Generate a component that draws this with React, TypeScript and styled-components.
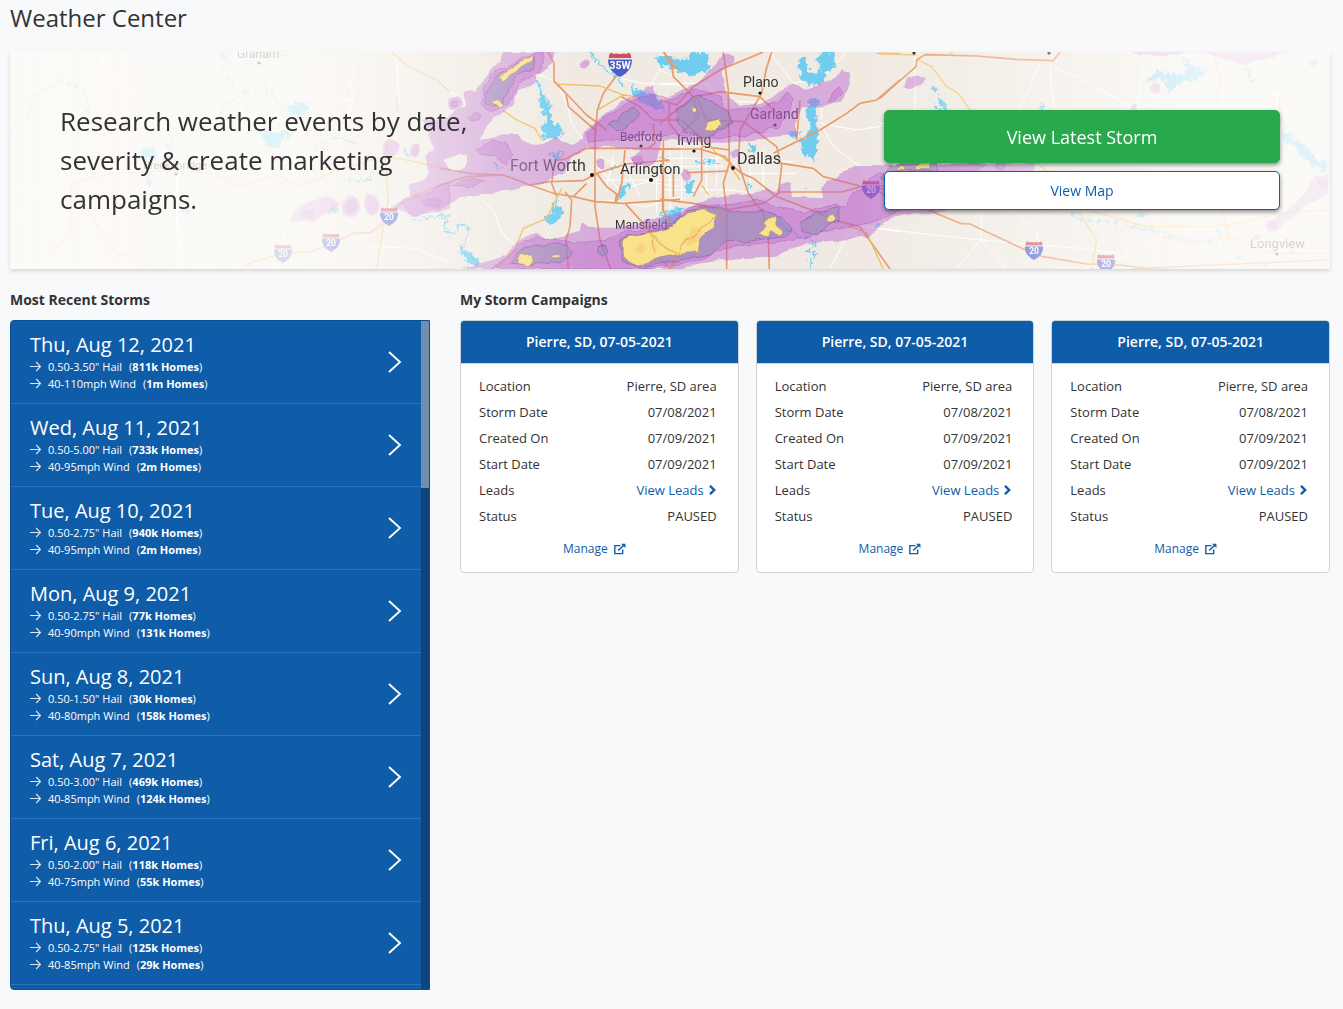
import React from "react";
import styled, { createGlobalStyle } from "styled-components";

const GlobalStyle = createGlobalStyle`
  *, *::before, *::after { box-sizing: border-box; }
  body {
    margin: 0;
    background: #f8f9fb;
    color: #333;
    font-family: "Open Sans", "Noto Sans", sans-serif;
    font-size: 13px;
    line-height: 20px;
  }
  h1, h2, h3, p, ul, dl, dd { margin: 0; padding: 0; }
  a { text-decoration: none; }
`;

const Page = styled.main`
  padding: 0 13px 19px 10px;
`;

const PageTitle = styled.h1`
  padding: 2px 0 18px;
  font-size: 24px;
  line-height: 32px;
  font-weight: 400;
`;

const Banner = styled.section`
  position: relative;
  display: flex;
  align-items: flex-start;
  justify-content: space-between;
  gap: 30px;
  padding: 50px;
  background: #fdfcfa;
  box-shadow: 0 2px 4px rgba(0, 0, 0, 0.14);
`;

const MapBackdrop = styled.svg`
  position: absolute;
  inset: 0;
  width: 100%;
  height: 100%;
`;

const BannerText = styled.p`
  position: relative;
  flex: 0 1 440px;
  font-size: 26px;
  line-height: 39px;
`;

const BannerActions = styled.div`
  position: relative;
  display: flex;
  flex-direction: column;
  gap: 8px;
  flex: 0 0 396px;
  padding-top: 8px;
`;

const ActionButton = styled.button<{ $primary?: boolean }>`
  height: ${(p) => (p.$primary ? 53 : 39)}px;
  border: 1px solid ${(p) => (p.$primary ? "#28a94b" : "#0f5ca8")};
  border-radius: 5px;
  background: ${(p) => (p.$primary ? "#28a94b" : "#fff")};
  color: ${(p) => (p.$primary ? "#fff" : "#0f5ca8")};
  font-family: inherit;
  font-size: ${(p) => (p.$primary ? 18 : 14)}px;
  box-shadow: 0 2px 4px rgba(0, 0, 0, 0.45);
  cursor: pointer;
`;

const Columns = styled.div`
  display: flex;
  align-items: flex-start;
  gap: 30px;
  padding-top: 21px;
`;

const StormColumn = styled.section`
  flex: 0 0 420px;
`;

const CampaignColumn = styled.section`
  flex: 1;
  min-width: 0;
`;

const SectionTitle = styled.h2`
  padding-bottom: 10px;
  font-size: 14px;
  line-height: 20px;
  font-weight: 700;
`;

const StormPanel = styled.div`
  display: flex;
  overflow: hidden;
  border: 1px solid #0c4f93;
  border-radius: 4px 0 0 4px;
  background: #0f5ca8;
`;

const StormList = styled.ul`
  flex: 1;
  padding-bottom: 4px;
  list-style: none;
`;

const ScrollTrack = styled.div`
  width: 8px;
  background: #10457c;
`;

const ScrollThumb = styled.div`
  height: 25%;
  background: #708fb0;
`;

const StormLink = styled.a`
  display: flex;
  align-items: center;
  justify-content: space-between;
  padding: 11px 19px;
  border-bottom: 1px solid #2b72bb;
  color: #fff;
`;

const StormDate = styled.h3`
  font-size: 20px;
  line-height: 26px;
  font-weight: 400;
`;

const StormFact = styled.p`
  display: flex;
  align-items: center;
  gap: 7px;
  font-size: 11px;
  line-height: 17px;
`;

const CardGrid = styled.div`
  display: grid;
  grid-template-columns: repeat(3, 1fr);
  gap: 17px;
`;

const Card = styled.article`
  overflow: hidden;
  border: 1px solid #d0d2d5;
  border-radius: 4px;
  background: #fff;
`;

const CardTitle = styled.h3`
  padding: 11px 10px;
  border-bottom: 1px solid #d0d2d5;
  background: #0f5ca8;
  color: #fff;
  font-size: 14px;
  line-height: 20px;
  font-weight: 600;
  text-align: center;
`;

const Details = styled.dl`
  padding: 9px 21px 0 18px;
`;

const DetailRow = styled.div`
  display: flex;
  justify-content: space-between;
  line-height: 26px;
`;

const LeadsLink = styled.a`
  display: flex;
  align-items: center;
  gap: 4px;
  color: #0f5ca8;
`;

const CardFooter = styled.div`
  display: flex;
  justify-content: center;
  padding: 10px 10px 13px 0;
`;

const ManageLink = styled.a`
  display: flex;
  align-items: center;
  gap: 6px;
  color: #0f5ca8;
  font-size: 12px;
  line-height: 20px;
`;

const ArrowIcon = () => (
  <svg width="11" height="11" viewBox="0 0 11 11" fill="none" stroke="#d9e7f5" strokeWidth="1.1" aria-hidden="true">
    <path d="M0 5.5H10.2M6.2 1L10.4 5.5L6.2 10" />
  </svg>
);

const ChevronIcon = () => (
  <svg width="14" height="22" viewBox="0 0 14 22" fill="none" stroke="#fff" strokeWidth="1.9" aria-hidden="true">
    <path d="M1 1L12 11L1 21" />
  </svg>
);

const SmallChevronIcon = () => (
  <svg width="9" height="10" viewBox="0 0 9 10" fill="none" stroke="#0f5ca8" strokeWidth="2.4" aria-hidden="true">
    <path d="M2 0.8L6.200 5L2 9.200" />
  </svg>
);

const ExternalIcon = () => (
  <svg width="12" height="12" viewBox="0 0 13 12" fill="none" stroke="#0f5ca8" strokeWidth="1.5" aria-hidden="true">
    <path d="M7 2.3H.9V11H9.4V6.6M4.4 7.6L10.8 1.8" />
    <path d="M7.6 .2H12.4V5Z" fill="#0f5ca8" stroke="none" />
  </svg>
);

const Shield = ({ x, y, label = "20", size = 1 }: { x: number; y: number; label?: string; size?: number }) => (
  <g transform={`translate(${x} ${y}) scale(${size})`}>
    <path d="M-8-8Q-6-9-5-7.5Q-3-8.500 0-7.500Q3-8.500 5-7.500Q6-9 8-8L9-3H-9Z" fill="#cf4c63" />
    <path d="M-9-4H9Q10 5 0 10Q-10 5-9-4Z" fill="#4c5ec6" />
    <path d="M-9-4H9" stroke="#fff" strokeWidth="1" />
    <text y="4" textAnchor="middle" fontSize={label.length > 2 ? 8 : 8.5} fontWeight="700" fill="#fff">{label}</text>
  </g>
);

interface Place { name: string; x: number; y: number; size: number; dot?: [number, number]; color?: string }

const places: Place[] = [
  { name: "Plano", x: 743, y: 87, size: 14, dot: [760, 93] },
  { name: "Garland", x: 750, y: 119, size: 14, dot: [775, 125] },
  { name: "Irving", x: 677, y: 145, size: 14, dot: [694, 151] },
  { name: "Dallas", x: 737, y: 164, size: 16, dot: [733, 168] },
  { name: "Bedford", x: 620, y: 141, size: 12, dot: [641, 146] },
  { name: "Arlington", x: 620, y: 174, size: 15, dot: [651, 180] },
  { name: "Fort Worth", x: 510, y: 171, size: 16, dot: [592, 175] },
  { name: "Mansfield", x: 615, y: 229, size: 12, dot: [642, 235] },
  { name: "Longview", x: 1250, y: 248, size: 13, dot: [1277, 254] },
  { name: "Graham", x: 237, y: 58, size: 12, dot: [259, 63] },
  { name: "Breckenridge", x: 143, y: 169, size: 11, dot: [176, 174] },
];

/* The map is drawn in four sectors at triple scale, running west to east. */
const WEST = "translate(0 40) scale(.33333)";
const CENTER = "translate(440 40) scale(.33333)";
const METRO = "translate(660 40) scale(.33333)";
const EAST = "translate(880 40) scale(.33333)";

const StormMap = () => (
  <MapBackdrop viewBox="10 52 1320 217" preserveAspectRatio="xMidYMid slice" aria-hidden="true" fontFamily="Roboto, sans-serif">
    <defs>
      <linearGradient id="haze">
        <stop offset="0" stopColor="#fefdfb" stopOpacity=".84" />
        <stop offset=".22" stopColor="#fefdfb" stopOpacity=".78" />
        <stop offset=".3" stopColor="#fefdfb" stopOpacity=".55" />
        <stop offset=".37" stopColor="#fefdfb" stopOpacity=".22" />
        <stop offset=".44" stopColor="#fefdfb" stopOpacity="0" />
        <stop offset=".64" stopColor="#fefdfb" stopOpacity="0" />
        <stop offset=".78" stopColor="#fefdfb" stopOpacity=".42" />
        <stop offset=".9" stopColor="#fefdfb" stopOpacity=".8" />
        <stop offset="1" stopColor="#fefdfb" stopOpacity=".8" />
      </linearGradient>
      <filter id="coast" filterUnits="userSpaceOnUse" x="0" y="40" width="1343" height="240">
        <feTurbulence type="turbulence" baseFrequency=".12" numOctaves="2" seed="4" />
        <feDisplacementMap in="SourceGraphic" scale="10" xChannelSelector="R" yChannelSelector="G" />
        <feOffset dx="-3" dy="-3" />
      </filter>
      <filter id="edge" filterUnits="userSpaceOnUse" x="0" y="40" width="1343" height="240">
        <feTurbulence type="fractalNoise" baseFrequency=".06" numOctaves="2" seed="9" />
        <feDisplacementMap in="SourceGraphic" scale="7" xChannelSelector="R" yChannelSelector="G" />
      </filter>
    </defs>
    <rect x="10" y="52" width="1320" height="217" fill="#f0eae3" />

    <g fill="none" stroke="#fff" strokeWidth="3" strokeLinejoin="round">
      <g transform={WEST}>
        <path d="M310 36L312 95L400 150L450 210L520 290M780 70L785 105L830 145L900 170L1060 180M780 105L735 190L650 290L560 380L530 400V540L545 655V687M0 420L100 450L220 430M110 450L70 520L30 570M860 430L858 560L835 687M1050 130L1060 180L1020 300L1060 400M1080 36L1050 130M1190 36L1195 180L1180 330M1050 540L1110 620L1250 625L1350 670M545 655L640 687" />
      </g>
      <g transform={CENTER}>
        <path d="M0 130L80 190M175 50L210 90L300 105L350 125L385 205L395 250L430 300L470 350M130 480L165 520L185 580L230 620M520 110L610 130L720 135M630 140L690 36M470 380L540 450L620 425L720 440M480 350L560 390L600 470M500 480L620 500L720 470M650 390V520M690 400V510M480 420H720M520 350L500 440" />
      </g>
      <g transform={METRO}>
        <path d="M0 130H140L180 185H330L400 130L490 110L560 36M0 355H200M0 380H190M30 330V470M65 320V480M140 350V470M170 330V440M0 450H220L330 470M230 380L270 360L400 365M260 400H410M270 340V450M310 330V450M385 150L415 240L410 310M480 250L590 270L720 250M485 240L480 160M490 265L520 320L600 380L660 430M260 540L230 590L200 687M510 687L560 590L610 560L720 575M200 440L180 520M40 110L0 90M330 36L400 130" />
      </g>
      <g transform={EAST}>
        <path d="M105 36V220M480 70L440 160L390 260M510 75L515 160L525 210M510 75L610 120L700 170L760 205L880 180L1010 170L1180 165L1340 175M0 565L120 580L300 600L600 625L720 640M305 520L302 600L230 687M302 600L380 687M400 510L470 580L480 620M0 250L120 250M790 80L770 200M1225 70L1190 180L1220 310L1320 350M610 687L760 640L850 590" />
      </g>
    </g>

    <g fill="#6fcdf0" stroke="#6fcdf0" filter="url(#coast)">
      <g transform={WEST}>
        <path d="M860 200L900 185L930 200L900 225L870 215ZM780 280L850 275L880 285L850 300L840 320L800 320ZM420 330L470 325L480 350L430 365ZM440 390L455 410L450 445L440 430ZM545 510L575 510L560 525ZM1210 330L1225 325L1220 350ZM980 520L1005 490L1015 515Z" />
        <path d="M30 300L40 250L60 230L80 235L90 190L120 160L180 120L200 130L250 150L270 220M655 36L690 70L660 100L700 130L715 165L660 215L590 210M735 200L740 150L780 120L810 150L830 190L880 225L930 230M500 350L520 290L540 300M940 340L1000 290L1080 310M1030 425L1110 420L1120 390M1240 540L1330 530L1350 590" fill="none" strokeWidth="3" />
      </g>
      <g transform={CENTER}>
        <path d="M295 135L320 180L335 205L335 245L370 275L355 295L318 300L310 270L320 240L305 195ZM345 490L374 508L360 535L340 555L310 538L340 520ZM575 140L650 170L678 210L640 205L590 175ZM540 440L570 435L558 465L535 480ZM650 60L690 45L720 60V100L680 85ZM330 340L375 340L350 360ZM160 365L190 385L175 392ZM682 530L720 515V550L690 600ZM55 620L110 650L115 687L80 665Z" />
        <path d="M280 110L300 140M450 40L480 75L530 110L560 150M0 535L25 530L10 575L50 585L60 550L85 555L80 605L55 640M500 390L540 380" fill="none" strokeWidth="4" />
      </g>
      <g transform={METRO}>
        <path d="M35 60L80 60L100 36L140 40L150 85L120 108L60 100ZM415 55L438 60L445 95L480 100L478 40L520 40L525 80L500 95L495 130L445 136L425 115ZM455 180L478 190L468 230L476 300L465 362L425 345L420 305L445 290L450 250L438 215ZM272 310L285 315L282 340L272 340ZM75 430L105 425L95 455L78 460ZM380 275L410 280L405 298ZM10 520L45 515L70 505L55 535L0 560ZM645 550L662 555L650 563Z" />
        <path d="M340 520L390 575L440 600L470 615L445 630L470 650L450 660L460 687M0 350L30 365M110 365L180 370M260 430L275 440L260 445M425 285L385 270M435 440V450" fill="none" strokeWidth="4" />
      </g>
      <g transform={EAST}>
        <path d="M785 135L830 90L870 105L925 100L905 60L960 90L985 95L950 120L900 130L870 165L865 125L830 120ZM175 170L190 180L200 210L178 208ZM155 145L172 145L170 160ZM485 190L495 210H485ZM1100 80L1125 105L1118 130ZM1200 210L1205 240L1198 250ZM1210 270L1245 300L1285 320L1320 370L1345 360V400L1290 380L1255 330L1215 300ZM778 515L800 525L785 540ZM1015 555L1022 570L1015 590Z" />
        <path d="M570 515L600 540L690 545L770 560L860 585L900 600L960 600L1020 605L1070 650L1180 687" fill="none" strokeWidth="4" strokeDasharray="20 8" />
      </g>
    </g>

    <g fill="none" stroke="#e99a68" strokeWidth="5" strokeLinejoin="round">
      <g transform={WEST}>
        <path d="M720 690L760 665L850 640L930 635L1000 610L1060 580L1110 578L1160 545L1210 480L1320 435" stroke="#eeb68c" />
        <path d="M150 630L210 590L215 430L330 400L500 392L640 400L720 440L830 405L895 440L1000 395L1150 350L1220 360L1350 388M215 430L270 520L345 640L390 645L460 685M1130 687L1150 560L1165 480L1155 350L1165 300M1175 36L1220 75L1310 120L1350 155M800 62L870 40M1192 170V220" stroke="#f1c981" strokeWidth="4" />
      </g>
      <g transform={CENTER}>
        <path d="M325 36L342 70L342 125L378 160L385 200L465 270V500L480 600L512 687M535 100L490 160L472 210L465 300V420M0 435L80 410L190 405L270 435L340 460L400 470L465 485L550 490L720 478M0 385L90 400L190 405M380 355L440 325H560L720 327M340 390L335 430L350 470M270 435L330 425L430 422L470 400L560 372L690 360M375 455L395 480L390 560L378 600L385 687M470 400L500 440L530 462L525 490M555 330L545 430L528 490M555 490L610 550L655 610L720 650M640 250L645 310L620 327M668 330V510L690 540L660 600M345 125L440 225L500 270M545 170L600 200L640 240H720M688 190V250L720 290M400 470L440 430M350 362L380 355M672 36L690 70L720 90" />
        <path d="M350 132L480 138L550 165L475 208M190 212L230 240L285 265L305 300M365 445L320 535L250 565L225 630L170 680M630 560L645 640L690 687M550 165L590 170" stroke="#efbd58" strokeWidth="4" />
      </g>
      <g transform={METRO}>
        <path d="M10 36L35 65L40 110L100 170L115 230L65 280M0 250L50 210L110 170L180 155L300 170L350 220M310 36L180 90L100 140L50 195L0 180M190 36L205 150L208 370L190 430L200 510V687M335 36L318 90L305 160L270 220L240 270L235 370L265 460L310 520L325 600L328 687M110 170L140 240L250 245L350 320L365 380L355 460L310 490L200 510L100 490L0 478M65 240L110 280L130 320L210 330M0 327H120L195 350L220 380L245 400L280 415L350 470L440 505L540 545L600 560L690 687M365 370L460 385L490 410L600 438L690 450M340 340L480 270L560 220L600 190L650 180L720 120M420 180L410 300M80 398L205 393M125 320V420L100 470M40 400V470M355 456H545L620 435L690 440M10 300V520" />
        <path d="M130 290L165 335L205 365M205 370L240 420M125 435L145 465M545 545L620 580L670 687M650 40H720" stroke="#efbd58" strokeWidth="4" />
      </g>
      <g transform={EAST}>
        <path d="M0 175L45 135L108 80L110 60L135 44L290 48L410 58L520 62L540 36M-30 430L10 465L150 512L240 550L270 552L430 627L490 650L620 672L720 675L820 687M760 687L1000 675L1340 660" />
        <path d="M0 42L110 45M115 60L155 80L200 140L235 160L270 210M205 45L220 36M470 370L510 400M595 515L650 600L635 687M640 515L800 560L1000 560L1100 545L1200 520L1340 510M1000 36L1020 120L1010 180M1200 170L1195 300M1025 510L1050 600M850 590L950 610L1040 590L1180 640L1340 640M1235 640V600" stroke="#f1c875" strokeWidth="4" />
      </g>
    </g>

    {places.map((p) => (
      <g key={p.name} fill={p.color || "#333"}>
        {p.dot && <circle cx={p.dot[0]} cy={p.dot[1]} r={p.size > 14 ? 2 : 1.6} fill="#111" />}
        <text x={p.x} y={p.y} fontSize={p.size} stroke="#f6f2ec" strokeWidth="2" strokeOpacity=".4" paintOrder="stroke">{p.name}</text>
      </g>
    ))}
    <g fill="#111">
      <circle cx="914" cy="53" r="1.600" />
      <circle cx="1049" cy="53" r="1.600" />
    </g>
    <Shield x={871} y={189} />

    <g filter="url(#edge)">
      <g fill="#b963d0" opacity=".46">
        <g transform={CENTER}>
          <path fillRule="evenodd" d="M195 36H345L335 70L290 105V130L235 150L215 200L160 235L140 265L115 300L190 283H232L245 305L310 310L350 290L400 315L432 300L430 275L480 235L560 175L620 140H642L648 190L700 170L760 135L790 118L845 45L880 50V70L845 95L850 150L895 198L990 180L1030 150L1060 135L1090 145L1165 125L1205 92L1230 98L1228 150L1200 188L1150 200L1090 195L1075 215L1070 285L1000 290L900 305H720L665 300L655 350L630 378L580 378L570 350L600 335L560 322L440 325L400 345L370 400L300 430L220 450L180 450L130 465L60 475L0 505L-70 530L-150 500L-90 470V440L-30 400L-40 350L-20 330L-25 300L-55 240L20 235L75 195L70 160L110 155L130 120L165 80ZM10 360L60 342L85 350L75 385L40 400Z" />
          <path d="M60 687L180 650L240 605L285 578L330 600L420 575L425 545L445 560H560L620 540L680 528L740 503L820 475L970 452L1015 455L1025 430L1055 435V470L1145 475L1150 440L1200 400L1240 378H1320L1350 370H1790L1760 440L1660 470L1470 520H1410L1360 530L1320 560L1280 590L1160 600L1100 610L1060 625L990 650L890 655L780 670L720 690Z" />
          <ellipse cx="45" cy="190" rx="20" ry="22" />
          <ellipse cx="433" cy="73" rx="13" ry="12" />
          <ellipse cx="483" cy="370" rx="13" ry="18" />
          <circle cx="885" cy="341" r="11" />
          <circle cx="738" cy="406" r="15" />
        </g>
        <g transform={WEST}>
          <path d="M860 550L880 515L930 485L985 468L1020 490L1000 515L930 545Z" />
          <ellipse cx="1050" cy="500" rx="26" ry="30" />
          <ellipse cx="1115" cy="493" rx="23" ry="30" />
          <circle cx="1173" cy="325" r="24" />
          <ellipse cx="1245" cy="330" rx="17" ry="21" />
        </g>
        <g transform={EAST}>
          <path d="M72 140L80 115L105 103L138 118L125 138L90 148ZM740 30H1275L1180 50L1100 72L1030 55L960 40L850 48L780 45ZM1345 400L1310 405L1275 460L1190 530L1155 555L1165 580L1190 570L1270 505L1345 460Z" />
          <circle cx="825" cy="145" r="15" />
          <circle cx="765" cy="204" r="12" />
          <circle cx="1300" cy="66" r="9" />
          <circle cx="1135" cy="590" r="9" />
        </g>
      </g>
      <g fill="#b65bc8" fillOpacity=".33" stroke="#8c3fa0" strokeOpacity=".45" strokeWidth="2">
        <g transform={CENTER}>
          <path d="M180 90L250 50L310 38L295 95L240 130L205 195L150 218L125 195L130 150L150 110ZM440 280L475 245L560 190L630 160L690 180L770 150L840 165L860 215L1010 190L1045 160L1062 175L1050 220L1010 265L900 290L720 288L630 285L520 300L450 310ZM150 687L200 650L250 610L290 592L400 610L500 600L560 575L700 545L740 505L820 495L960 480L1010 500L1100 520L1190 492L1210 500L1240 460L1320 400L1500 375H1640L1400 500L1320 540L1240 560L1150 575L1100 590L990 610L860 625L760 665L620 687ZM110 330L160 300L195 310L215 340L205 375L160 340L120 345Z" />
          <ellipse cx="45" cy="190" rx="9" ry="11" />
          <ellipse cx="592" cy="362" rx="15" ry="15" />
          <path d="M1160 190L1175 158L1200 143L1212 160L1185 185ZM85 230L105 210L123 220L118 240L95 240ZM35 440L60 425L120 415L135 420L95 440Z" />
        </g>
        <g transform={WEST}>
          <path d="M900 530L915 515L940 520L925 535ZM1205 490L1270 460L1350 430V500L1290 520L1240 530Z" />
          <ellipse cx="1050" cy="500" rx="12" ry="16" />
          <ellipse cx="1295" cy="487" rx="24" ry="14" />
        </g>
        <g transform={EAST}>
          <circle cx="362" cy="378" r="12" />
          <circle cx="1325" cy="430" r="12" />
          <circle cx="1175" cy="553" r="13" />
        </g>
      </g>
      <g fill="#8f8fb4" fillOpacity=".52" stroke="#7d3b96" strokeOpacity=".6" strokeWidth="2">
        <g transform={CENTER}>
          <path d="M165 115L230 70L285 48L280 85L225 115L195 170L185 205L140 195L135 160ZM500 255L530 240L545 215L585 203L598 225L580 245L530 270ZM710 205L775 165L820 185L870 225L875 250L800 292L735 275L715 240ZM215 670L235 640L280 615L380 615L400 635L360 668L270 675ZM475 620L495 613L505 640L488 652L472 640ZM540 605L560 590L690 560L740 515L830 500L870 515L970 512L1030 535L1060 570L1030 590L910 610L860 600L820 640L720 660L600 685L550 660ZM1080 550L1130 520L1200 498L1200 545L1160 560L1130 585L1090 575Z" />
        </g>
        <g transform={EAST}><path d="M5 415L30 375L170 370V392H80L30 430Z" /></g>
      </g>
      <g fill="#ffe885" fillOpacity=".93" stroke="#a98462" strokeWidth="1.500">
        <g transform={CENTER}>
          <path d="M180 118L205 85L235 72L255 55L280 46L278 60L255 80L220 100L190 125ZM153 185L172 178L190 200L178 207ZM550 600L600 582L680 570L740 522L795 512L830 525L825 560L780 600L775 635L700 645L640 660L590 678L550 640ZM232 668L242 648L275 645L283 665L260 677ZM338 648L360 647V656L338 655ZM790 270L805 245L840 237L850 255L825 275Z" />
          <circle cx="760" cy="207" r="7" />
          <path d="M955 585L978 555L970 540L1005 528L1008 555L1030 580L1015 588L995 572L985 590Z" />
          <circle cx="1171" cy="537" r="15" />
        </g>
        <g transform={EAST}>
          <path d="M50 390Q65 365 82 392ZM105 380L125 370L150 375L148 388L108 388Z" />
        </g>
      </g>
      <g transform={CENTER} fill="#f3a95c" opacity=".25">
        <path d="M740 590L760 560L790 570L775 600L750 620L730 610ZM580 630L600 610L620 620L610 640Z" />
      </g>
      <g transform={CENTER} fill="none" stroke="#d98a5c" strokeOpacity=".5" strokeWidth="4">
        <path d="M610 550L655 610L720 650M690 687L720 620L790 560L850 510M630 570L645 640" />
      </g>
    </g>

    <Shield x={620} y={64} label="35W" size={1.3} />
    <Shield x={389} y={216} />
    <Shield x={331} y={242} />
    <Shield x={283} y={253} />
    <Shield x={1034} y={250} />
    <Shield x={1106} y={263} />
    <rect x="10" y="52" width="1320" height="217" fill="url(#haze)" />
  </MapBackdrop>
);

interface Storm { date: string; hail: string; hailHomes: string; wind: string; windHomes: string }

const storms: Storm[] = [
  { date: "Thu, Aug 12, 2021", hail: "0.50-3.50", hailHomes: "811k", wind: "40-110", windHomes: "1m" },
  { date: "Wed, Aug 11, 2021", hail: "0.50-5.00", hailHomes: "733k", wind: "40-95", windHomes: "2m" },
  { date: "Tue, Aug 10, 2021", hail: "0.50-2.75", hailHomes: "940k", wind: "40-95", windHomes: "2m" },
  { date: "Mon, Aug 9, 2021", hail: "0.50-2.75", hailHomes: "77k", wind: "40-90", windHomes: "131k" },
  { date: "Sun, Aug 8, 2021", hail: "0.50-1.50", hailHomes: "30k", wind: "40-80", windHomes: "158k" },
  { date: "Sat, Aug 7, 2021", hail: "0.50-3.00", hailHomes: "469k", wind: "40-85", windHomes: "124k" },
  { date: "Fri, Aug 6, 2021", hail: "0.50-2.00", hailHomes: "118k", wind: "40-75", windHomes: "55k" },
  { date: "Thu, Aug 5, 2021", hail: "0.50-2.75", hailHomes: "125k", wind: "40-85", windHomes: "29k" },
];

const campaigns = [1, 2, 3].map((id) => ({
  id,
  title: "Pierre, SD, 07-05-2021",
  location: "Pierre, SD area",
  stormDate: "07/08/2021",
  createdOn: "07/09/2021",
  startDate: "07/09/2021",
  status: "PAUSED",
}));

const Homes = ({ count }: { count: string }) => (
  <span>(<b>{count} Homes</b>)</span>
);

const StormItem = ({ storm }: { storm: Storm }) => (
  <li>
    <StormLink href="#storm">
      <div>
        <StormDate>{storm.date}</StormDate>
        <StormFact><ArrowIcon /><span>{storm.hail}" Hail</span><Homes count={storm.hailHomes} /></StormFact>
        <StormFact><ArrowIcon /><span>{storm.wind}mph Wind</span><Homes count={storm.windHomes} /></StormFact>
      </div>
      <ChevronIcon />
    </StormLink>
  </li>
);

const CampaignCard = ({ campaign }: { campaign: (typeof campaigns)[number] }) => (
  <Card>
    <CardTitle>{campaign.title}</CardTitle>
    <Details>
      <DetailRow><dt>Location</dt><dd>{campaign.location}</dd></DetailRow>
      <DetailRow><dt>Storm Date</dt><dd>{campaign.stormDate}</dd></DetailRow>
      <DetailRow><dt>Created On</dt><dd>{campaign.createdOn}</dd></DetailRow>
      <DetailRow><dt>Start Date</dt><dd>{campaign.startDate}</dd></DetailRow>
      <DetailRow><dt>Leads</dt><dd><LeadsLink href="#leads">View Leads<SmallChevronIcon /></LeadsLink></dd></DetailRow>
      <DetailRow><dt>Status</dt><dd>{campaign.status}</dd></DetailRow>
    </Details>
    <CardFooter>
      <ManageLink href="#manage">Manage<ExternalIcon /></ManageLink>
    </CardFooter>
  </Card>
);

export default function App() {
  return (
    <>
      <GlobalStyle />
      <Page>
        <PageTitle>Weather Center</PageTitle>
        <Banner>
          <StormMap />
          <BannerText>Research weather events by date, severity &amp; create marketing campaigns.</BannerText>
          <BannerActions>
            <ActionButton type="button" $primary>View Latest Storm</ActionButton>
            <ActionButton type="button">View Map</ActionButton>
          </BannerActions>
        </Banner>
        <Columns>
          <StormColumn>
            <SectionTitle>Most Recent Storms</SectionTitle>
            <StormPanel>
              <StormList>
                {storms.map((storm) => <StormItem key={storm.date} storm={storm} />)}
              </StormList>
              <ScrollTrack><ScrollThumb /></ScrollTrack>
            </StormPanel>
          </StormColumn>
          <CampaignColumn>
            <SectionTitle>My Storm Campaigns</SectionTitle>
            <CardGrid>
              {campaigns.map((c) => <CampaignCard key={c.id} campaign={c} />)}
            </CardGrid>
          </CampaignColumn>
        </Columns>
      </Page>
    </>
  );
}
